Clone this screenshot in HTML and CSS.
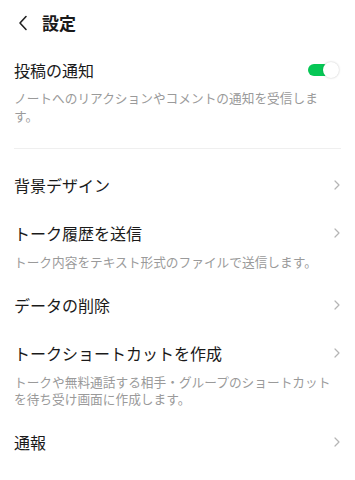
FILE: index.html
```html
<!DOCTYPE html>
<html lang="ja">
<head>
    <meta charset="UTF-8">
    <meta name="viewport" content="width=device-width, initial-scale=1.0">
    <title>設定</title>
    <link rel="stylesheet" href="styles.css">
</head>
<body>
    <!-- Header -->
    <header class="header">
        <svg class="back" width="10" height="16" viewBox="0 0 10 16">
            <path d="M8 1.5 L2 8 L8 14.5" fill="none" stroke="#222" stroke-width="1.6" stroke-linecap="round" stroke-linejoin="round"/>
        </svg>
        <h1>設定</h1>
    </header>

    <!-- Notification section -->
    <section class="section top">
        <div class="row">
            <div class="row-head">
                <span class="label">投稿の通知</span>
                <span class="toggle on"><span class="knob"></span></span>
            </div>
            <p class="desc narrow">ノートへのリアクションやコメントの通知を受信します。</p>
        </div>
    </section>

    <div class="divider"></div>

    <!-- Menu -->
    <section class="section menu">
        <div class="row">
            <div class="row-head">
                <span class="label">背景デザイン</span>
                <svg class="chevron" width="6" height="10" viewBox="0 0 6 10"><path d="M1 1 L5 5 L1 9" fill="none" stroke="#b5b5b5" stroke-width="1.2" stroke-linecap="round" stroke-linejoin="round"/></svg>
            </div>
        </div>
        <div class="row with-desc">
            <div class="row-head">
                <span class="label">トーク履歴を送信</span>
                <svg class="chevron" width="6" height="10" viewBox="0 0 6 10"><path d="M1 1 L5 5 L1 9" fill="none" stroke="#b5b5b5" stroke-width="1.2" stroke-linecap="round" stroke-linejoin="round"/></svg>
            </div>
            <p class="desc">トーク内容をテキスト形式のファイルで送信します。</p>
        </div>
        <div class="row">
            <div class="row-head">
                <span class="label">データの削除</span>
                <svg class="chevron" width="6" height="10" viewBox="0 0 6 10"><path d="M1 1 L5 5 L1 9" fill="none" stroke="#b5b5b5" stroke-width="1.2" stroke-linecap="round" stroke-linejoin="round"/></svg>
            </div>
        </div>
        <div class="row with-desc">
            <div class="row-head">
                <span class="label">トークショートカットを作成</span>
                <svg class="chevron" width="6" height="10" viewBox="0 0 6 10"><path d="M1 1 L5 5 L1 9" fill="none" stroke="#b5b5b5" stroke-width="1.2" stroke-linecap="round" stroke-linejoin="round"/></svg>
            </div>
            <p class="desc">トークや無料通話する相手・グループのショートカットを待ち受け画面に作成します。</p>
        </div>
        <div class="row">
            <div class="row-head">
                <span class="label">通報</span>
                <svg class="chevron" width="6" height="10" viewBox="0 0 6 10"><path d="M1 1 L5 5 L1 9" fill="none" stroke="#b5b5b5" stroke-width="1.2" stroke-linecap="round" stroke-linejoin="round"/></svg>
            </div>
        </div>
    </section>
</body>
</html>
```

FILE: styles.css
```css
body {
    margin: 0;
    padding: 0;
    background: #fff;
    font-family: "Noto Sans CJK JP", "Noto Sans", sans-serif;
    color: #1a1a1a;
}

.header {
    height: 46px;
    display: flex;
    align-items: center;
    padding: 0 14px 0 18px;
}

.header .back {
    margin-right: 14px;
}

.header h1 {
    margin: 0;
    font-size: 17px;
    font-weight: bold;
    line-height: 22px;
}

.section {
    padding: 0 14px;
}

.section.top {
    padding-bottom: 10px;
}

.section.menu {
    padding-top: 12px;
}

.row {
    padding: 13px 0;
}

.row.with-desc {
    padding-bottom: 11px;
}

.row-head {
    display: flex;
    align-items: center;
    justify-content: space-between;
    height: 22px;
}

.label {
    font-size: 16px;
    line-height: 22px;
}

.desc {
    margin: 9px 0 0;
    font-size: 12.7px;
    line-height: 17px;
    color: #9a9a9a;
}

.desc.narrow {
    margin-top: 8px;
    line-height: 18px;
    padding-right: 14px;
}

.chevron {
    margin-right: 1px;
}

.divider {
    height: 1px;
    background: #efefef;
    margin: 0 14px;
}

.toggle {
    position: relative;
    width: 26px;
    height: 12px;
    border-radius: 6px;
    background: #ccc;
    margin-right: 7px;
}

.toggle.on {
    background: #06c755;
}

.toggle .knob {
    position: absolute;
    top: -2px;
    right: -5px;
    width: 16px;
    height: 16px;
    border-radius: 50%;
    background: #fff;
    box-shadow: 0 0 2px rgba(0,0,0,0.25);
}
```
